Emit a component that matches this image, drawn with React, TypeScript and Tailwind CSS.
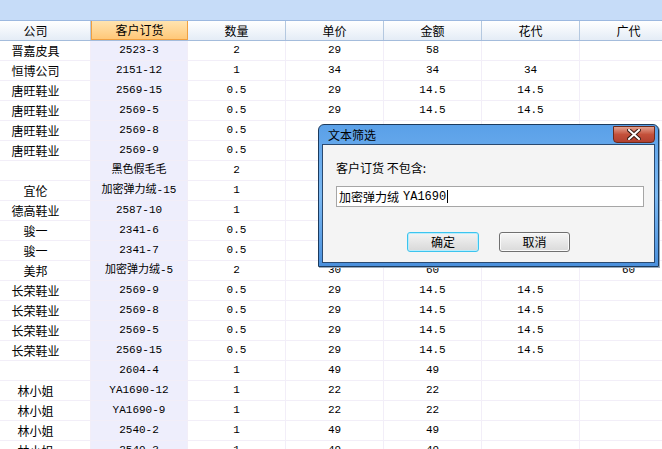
import React from "react";

type Row = [string, string, string, string, string, string, string];

const rows: Row[] = [
  ["晋嘉皮具", "2523-3", "2", "29", "58", "", ""],
  ["恒博公司", "2151-12", "1", "34", "34", "34", ""],
  ["唐旺鞋业", "2569-15", "0.5", "29", "14.5", "14.5", ""],
  ["唐旺鞋业", "2569-5", "0.5", "29", "14.5", "14.5", ""],
  ["唐旺鞋业", "2569-8", "0.5", "29", "14.5", "14.5", ""],
  ["唐旺鞋业", "2569-9", "0.5", "29", "14.5", "14.5", ""],
  ["", "黑色假毛毛", "2", "", "", "", ""],
  ["宜伦", "加密弹力绒-15", "1", "", "", "", ""],
  ["德高鞋业", "2587-10", "1", "", "", "", ""],
  ["骏一", "2341-6", "0.5", "", "", "", ""],
  ["骏一", "2341-7", "0.5", "", "", "", ""],
  ["美邦", "加密弹力绒-5", "2", "30", "60", "", "60"],
  ["长荣鞋业", "2569-9", "0.5", "29", "14.5", "14.5", ""],
  ["长荣鞋业", "2569-8", "0.5", "29", "14.5", "14.5", ""],
  ["长荣鞋业", "2569-5", "0.5", "29", "14.5", "14.5", ""],
  ["长荣鞋业", "2569-15", "0.5", "29", "14.5", "14.5", ""],
  ["", "2604-4", "1", "49", "49", "", ""],
  ["林小姐", "YA1690-12", "1", "22", "22", "", ""],
  ["林小姐", "YA1690-9", "1", "22", "22", "", ""],
  ["林小姐", "2540-2", "1", "49", "49", "", ""],
  ["林小姐", "2540-3", "1", "49", "49", "", ""],
];

const headers = ["公司", "客户订货", "数量", "单价", "金额", "花代", "广代"];
const widths = ["w-[91px]", "w-[97px]", "w-[98px]", "w-[98px]", "w-[98px]", "w-[98px]", "w-[98px]"];

const cellFont = { fontFamily: '"Liberation Mono", "Noto Sans CJK SC", monospace' };
const uiFont = { fontFamily: '"Noto Sans CJK SC", "Liberation Sans", sans-serif' };

function CloseButton() {
  return (
    <div className="absolute right-0 top-[1px] flex h-[17px] w-[42px] items-center justify-center rounded-b-[4px] border border-[#6b2a1c] bg-gradient-to-b from-[#e0a090] via-[#c4503a] to-[#b04030]">
      <svg width="14" height="11" viewBox="0 0 14 11">
        <path d="M2 1 L12 10 M12 1 L2 10" stroke="#3a1a14" strokeWidth="4" strokeLinecap="square" />
        <path d="M2 1 L12 10 M12 1 L2 10" stroke="#ffffff" strokeWidth="2" strokeLinecap="square" />
      </svg>
    </div>
  );
}

function FilterDialog() {
  return (
    <div
      className="absolute left-[318px] top-[124px] flex h-[143px] w-[341px] flex-col rounded-t-[6px] border border-[#1c3a5c] bg-gradient-to-b from-[#5aa0e8] via-[#7ab8f2] to-[#4a90dc] px-[3px] pb-[3px] shadow-[1px_1px_0_#9ab]"
      style={uiFont}
    >
      <div className="relative flex h-[19px] shrink-0 items-center pl-[6px] text-[12px] text-black">
        文本筛选
        <CloseButton />
      </div>
      <div className="flex flex-1 flex-col border border-[#2a4a70] bg-[#f4f4f4] px-[13px]">
        <div className="mt-[15px] text-[12px] leading-[16px] text-black">客户订货 不包含:</div>
        <div className="mt-[10px] flex h-[21px] w-[308px] items-center border border-[#a6a6a6] bg-white px-[2px] text-[12px] text-black">
          加密弹力绒 <span className="ml-[4px]" style={cellFont}>YA1690</span>
          <span className="ml-[1px] inline-block h-[13px] w-px bg-black" />
        </div>
        <div className="mt-[25px] flex justify-center gap-[20px]">
          <button className="h-[20px] w-[72px] rounded-[3px] border border-[#3cc4ee] bg-gradient-to-b from-[#f4f4f4] to-[#d8d8d8] text-[12px] text-black shadow-[inset_0_0_0_1px_#b8ecfc]">
            确定
          </button>
          <button className="h-[20px] w-[71px] rounded-[3px] border border-[#707070] bg-gradient-to-b from-[#f6f6f6] to-[#dadada] text-[12px] text-black shadow-[inset_0_0_0_1px_#fafafa]">
            取消
          </button>
        </div>
      </div>
    </div>
  );
}

export default function App() {
  return (
    <div className="relative h-[449px] w-[662px] overflow-hidden bg-white">
      {/* top group bar */}
      <div className="h-[21px] border-b border-[#9cb8e0] bg-[#c6dcf8]" />

      {/* header */}
      <div className="flex h-[20px] border-b border-[#a4bcdc] text-[12px] text-black" style={uiFont}>
        {headers.map((h, i) => (
          <div
            key={h}
            className={`${widths[i]} flex shrink-0 items-center justify-center border-r ${
              i === 1
                ? "border-[#f0a040] border-x border-b bg-gradient-to-b from-[#ffe4b0] to-[#ffc878]"
                : "border-[#b4c8e0] bg-gradient-to-b from-[#ffffff] to-[#e4ecf6]"
            } ${i === 0 ? "pr-[19px]" : ""}`}
          >
            {h}
          </div>
        ))}
      </div>

      {/* rows */}
      {rows.map((r, ri) => (
        <div key={ri} className="flex h-[20px] text-black">
          {r.map((c, ci) => (
            <div
              key={ci}
              className={`${widths[ci]} flex shrink-0 items-center justify-center border-b border-r border-[#f2eef8] ${
                ci === 1 ? "bg-[#eeeefc]" : ""
              } ${ci === 0 ? "pr-[19px] text-[12px]" : "text-[11px]"}`}
              style={ci === 0 ? uiFont : cellFont}
            >
              {c}
            </div>
          ))}
        </div>
      ))}

      <FilterDialog />
    </div>
  );
}
